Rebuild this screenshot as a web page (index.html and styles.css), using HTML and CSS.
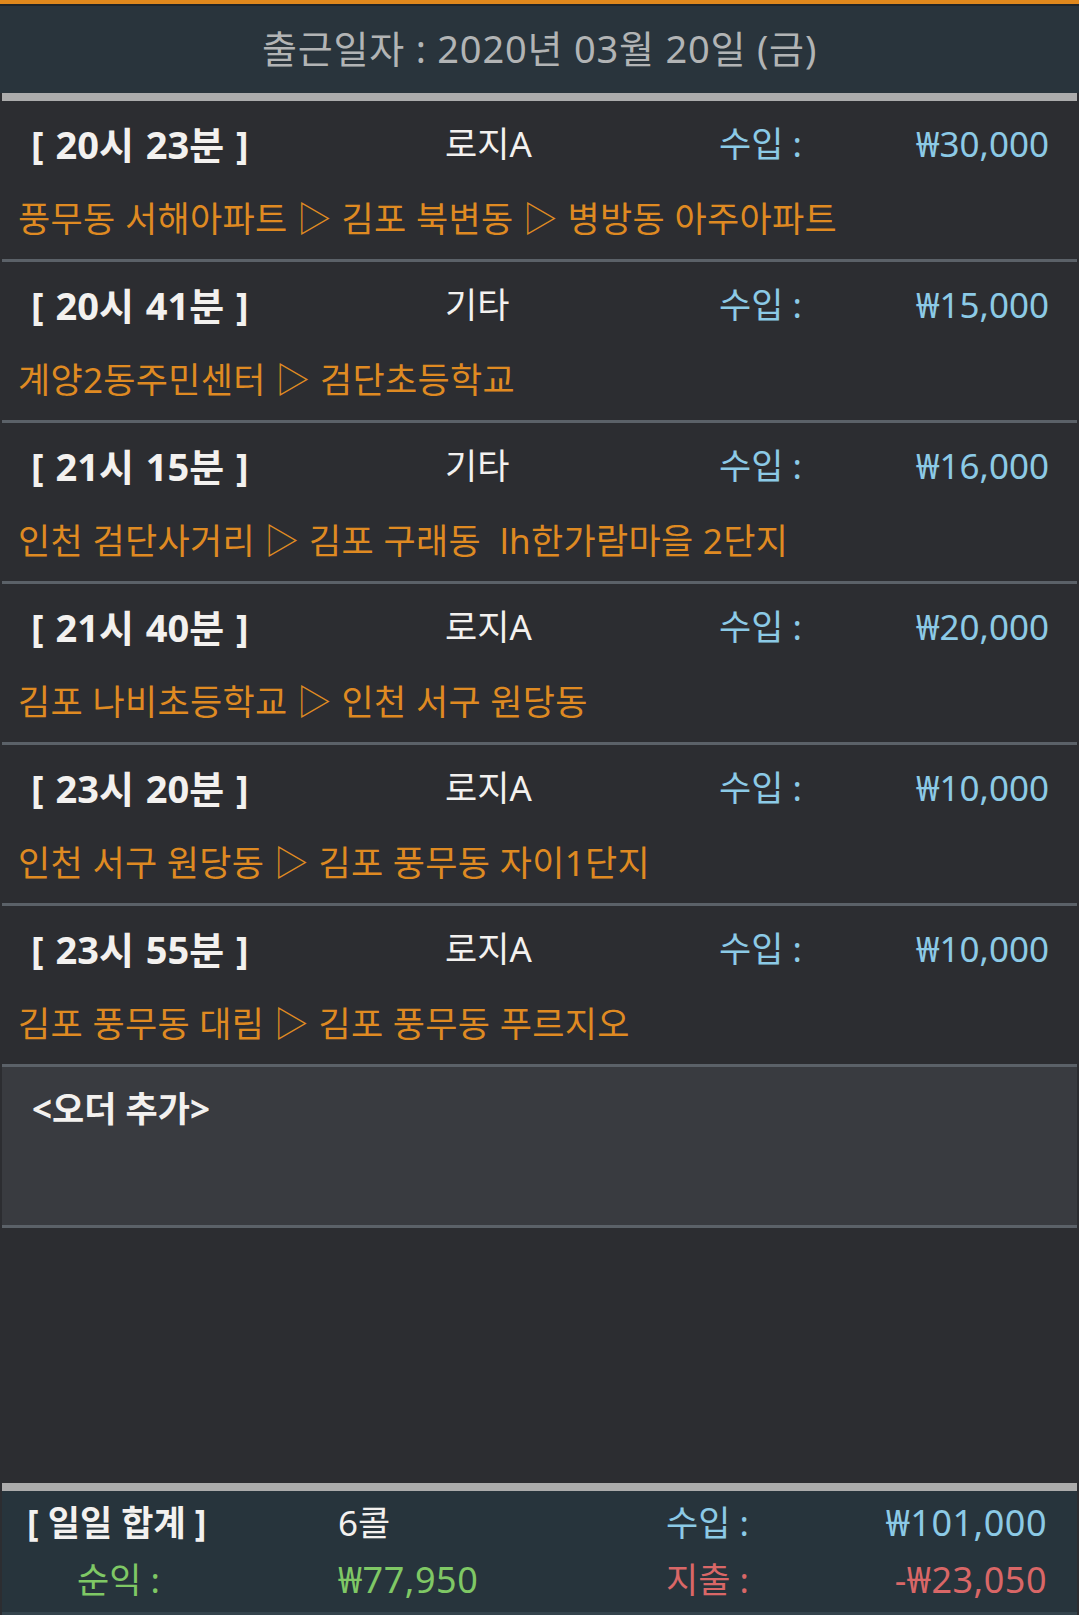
FILE: index.html
```html
<!DOCTYPE html>
<html lang="ko">
<head>
  <meta charset="UTF-8">
  <title>출근일자</title>
  <link rel="stylesheet" href="styles.css">
</head>
<body>
  <div class="header">출근일자 : 2020년 03월 20일 (금)</div>

  <div class="list">
    <div class="order">
      <div class="order-top">
        <span class="time">[ 20시 23분 ]</span>
        <span class="kind">로지A</span>
        <span class="label">수입 :</span>
        <span class="amount">₩30,000</span>
      </div>
      <div class="route">풍무동 서해아파트 ▷ 김포 북변동 ▷ 병방동 아주아파트</div>
    </div>
    <div class="order">
      <div class="order-top">
        <span class="time">[ 20시 41분 ]</span>
        <span class="kind">기타</span>
        <span class="label">수입 :</span>
        <span class="amount">₩15,000</span>
      </div>
      <div class="route">계양2동주민센터 ▷ 검단초등학교</div>
    </div>
    <div class="order">
      <div class="order-top">
        <span class="time">[ 21시 15분 ]</span>
        <span class="kind">기타</span>
        <span class="label">수입 :</span>
        <span class="amount">₩16,000</span>
      </div>
      <div class="route">인천 검단사거리 ▷ 김포 구래동&nbsp; lh한가람마을 2단지</div>
    </div>
    <div class="order">
      <div class="order-top">
        <span class="time">[ 21시 40분 ]</span>
        <span class="kind">로지A</span>
        <span class="label">수입 :</span>
        <span class="amount">₩20,000</span>
      </div>
      <div class="route">김포 나비초등학교 ▷ 인천 서구 원당동</div>
    </div>
    <div class="order">
      <div class="order-top">
        <span class="time">[ 23시 20분 ]</span>
        <span class="kind">로지A</span>
        <span class="label">수입 :</span>
        <span class="amount">₩10,000</span>
      </div>
      <div class="route">인천 서구 원당동 ▷ 김포 풍무동 자이1단지</div>
    </div>
    <div class="order">
      <div class="order-top">
        <span class="time">[ 23시 55분 ]</span>
        <span class="kind">로지A</span>
        <span class="label">수입 :</span>
        <span class="amount">₩10,000</span>
      </div>
      <div class="route">김포 풍무동 대림 ▷ 김포 풍무동 푸르지오</div>
    </div>
    <div class="add-order">&lt;오더 추가&gt;</div>
  </div>

  <div class="summary">
    <span class="time">[ 일일 합계 ]</span>
    <span class="kind">6콜</span>
    <span class="label">수입 :</span>
    <span class="amount">₩101,000</span>
    <span class="net indent">순익 :</span>
    <span class="net">₩77,950</span>
    <span class="cost">지출 :</span>
    <span class="cost amount">-₩23,050</span>
  </div>
</body>
</html>
```

FILE: styles.css
```css
html, body { margin: 0; padding: 0; }
body { background-color: #2c2d31; color: #f3f1ef; font-family: "Noto Sans", "Noto Sans CJK KR", sans-serif; width: 1079px; height: 1615px; display: flex; flex-direction: column; overflow: hidden; }

.header { border-top: 4px solid #e0881c; box-shadow: inset 0 2px 0 #1f2428; background-color: #29343c; height: 89px; line-height: 89px; text-align: center; font-size: 38px; letter-spacing: 0.8px; color: #b2b4b5; }

.list { margin: 0 2px; border-top: 8px solid #acacac; }
.order { height: 140px; border-bottom: 3px solid #5b6168; padding: 18px 28px 0 29px; }
.order-top { display: grid; grid-template-columns: 414px 274px 1fr auto; height: 50px; line-height: 50px; font-size: 35px; }
.time { font-weight: bold; }
.order .time { font-size: 38px; word-spacing: 2px; }
.label { color: #8ccae6; }
.amount { color: #8ccae6; text-align: right; }
.route { margin: 25px 0 0 -13px; line-height: 50px; font-size: 35px; letter-spacing: 0.3px; color: #df8a22; white-space: nowrap; }

.add-order { background-color: #393b40; height: 141px; padding: 17px 0 0 30px; border-bottom: 3px solid #5b6168; line-height: 50px; font-size: 35px; font-weight: bold; }

.summary { margin: auto 2px 0; border-top: 8px solid #acacac; border-bottom: 3px solid #34434c; background-color: #27343c; height: 107px; padding: 7px 30px 7px 25px; display: grid; grid-template-columns: 311px 328px 1fr auto; grid-auto-rows: 50px; row-gap: 7px; line-height: 50px; font-size: 35px; }
.summary .indent { padding-left: 50px; }
.summary .amount, .summary .net + .net { font-size: 36px; letter-spacing: 0.5px; }
.net { color: #7fc865; }
.cost { color: #d96767; }
.summary .cost.amount { color: #d96767; }
```
